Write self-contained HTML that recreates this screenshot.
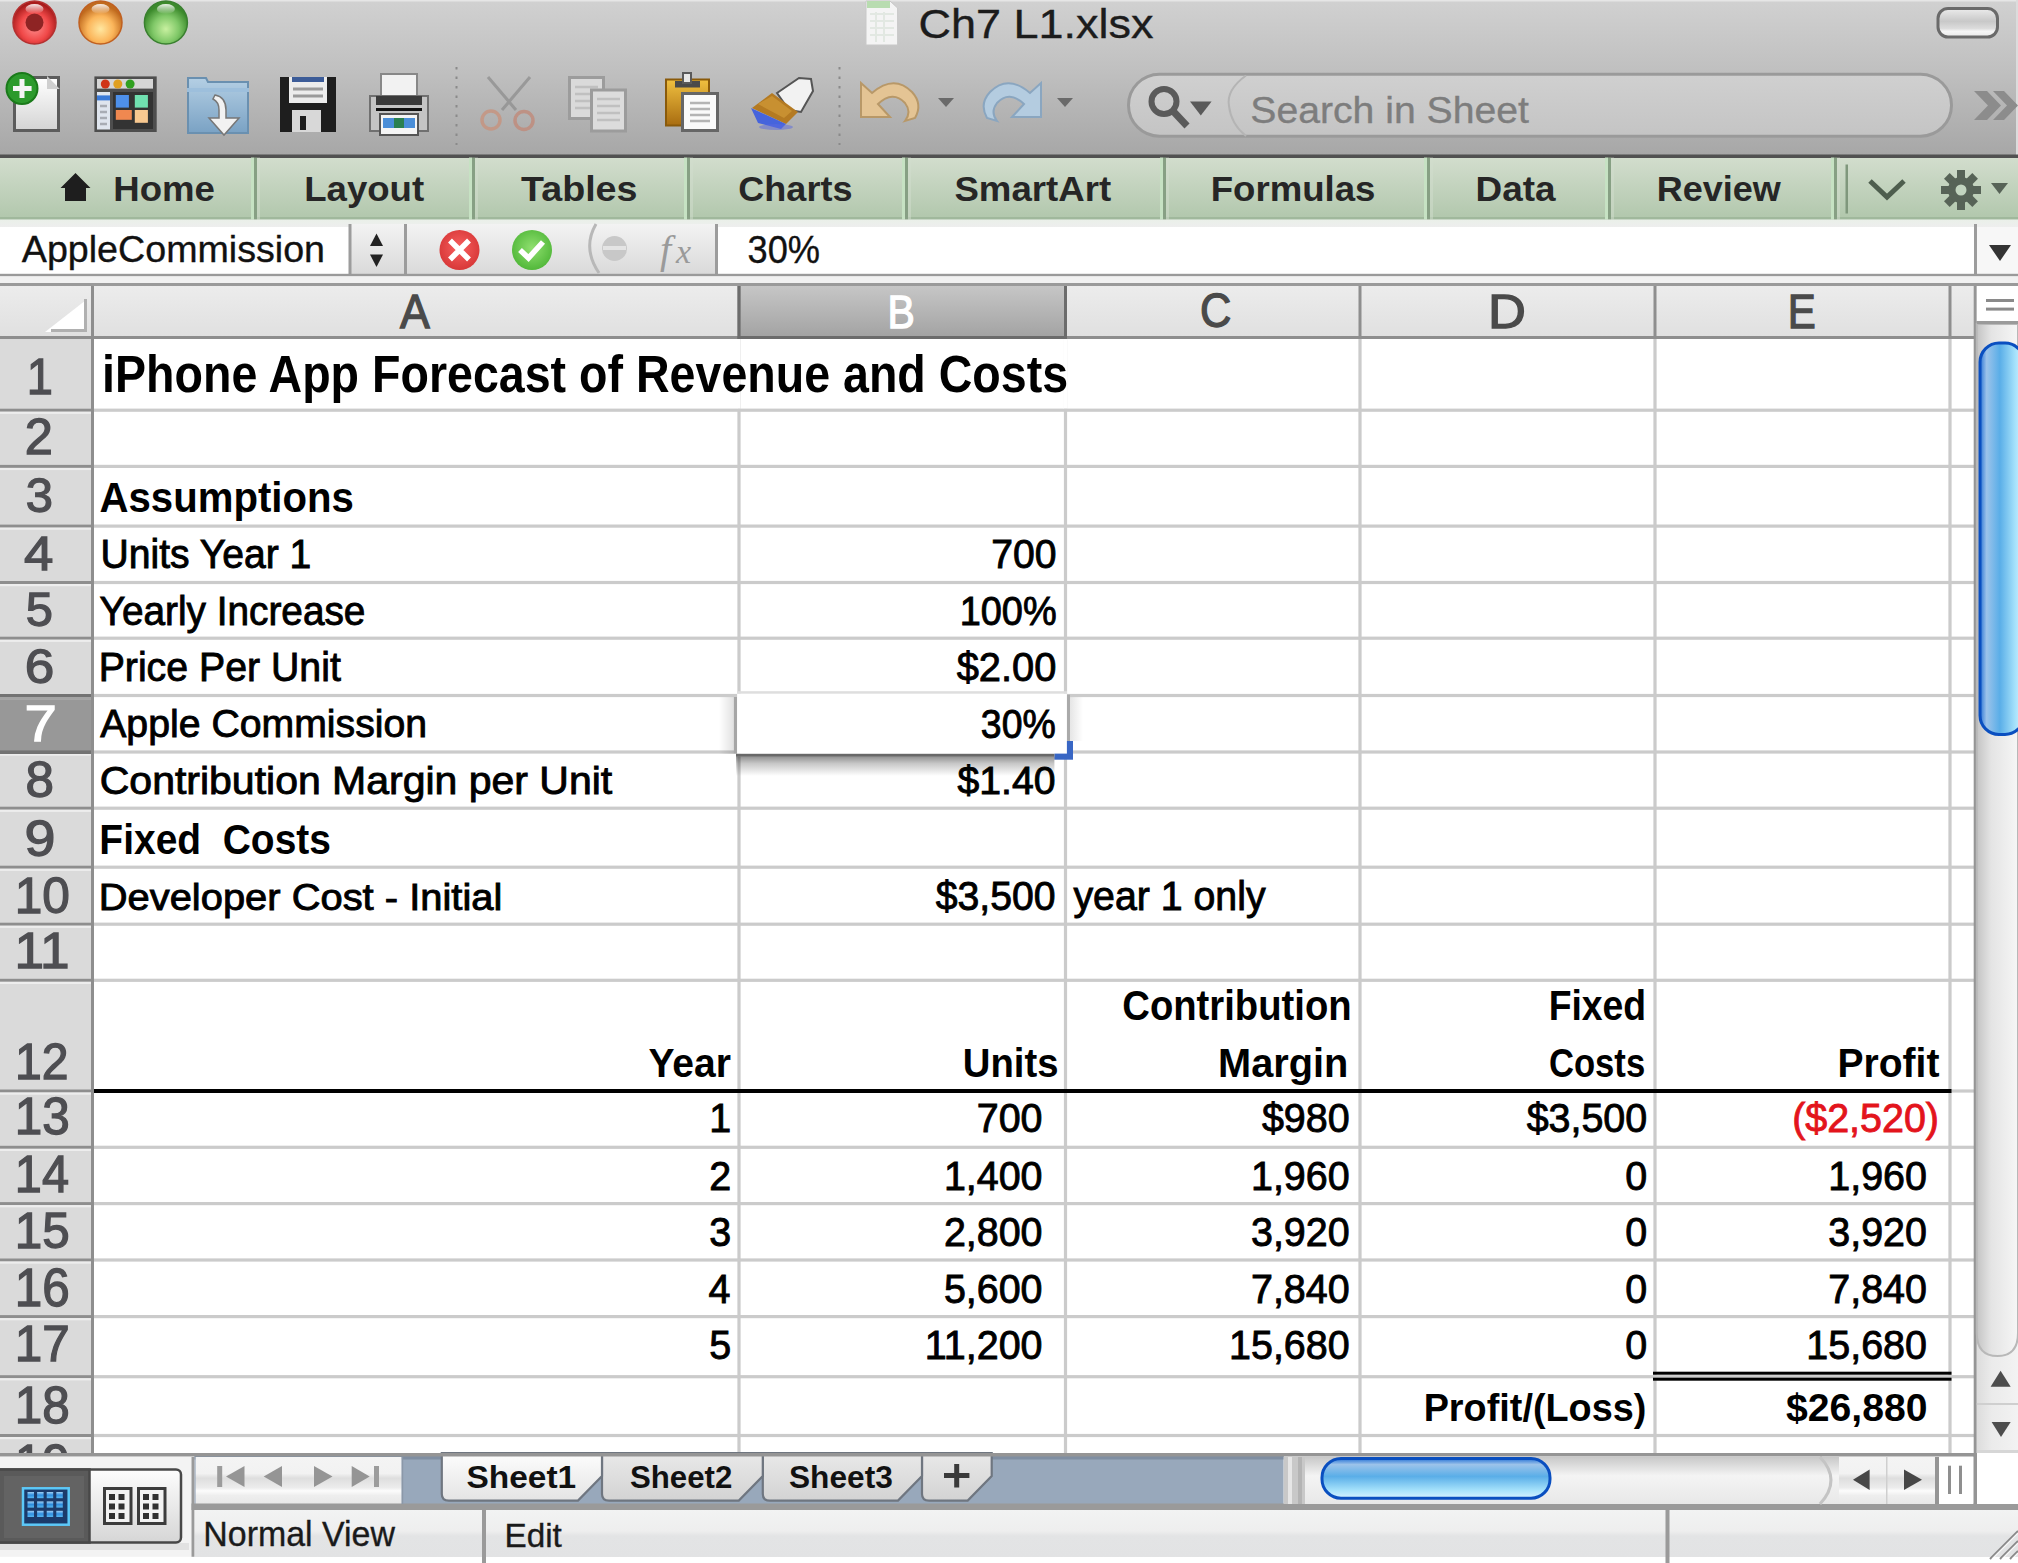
<!DOCTYPE html>
<html><head><meta charset="utf-8"><title>Ch7 L1.xlsx</title>
<style>html,body{margin:0;padding:0;background:#fff;overflow:hidden;width:2018px;height:1563px}</style></head>
<body><svg width="2018" height="1563" viewBox="0 0 2018 1563" style="display:block;font-family:'Liberation Sans',sans-serif">
<defs><linearGradient id="gTool" x1="0" y1="0" x2="0" y2="1"><stop offset="0" stop-color="#d1d1d1"/><stop offset="0.45" stop-color="#c0c0c0"/><stop offset="1" stop-color="#a7a7a7"/></linearGradient><linearGradient id="gRib" x1="0" y1="0" x2="0" y2="1"><stop offset="0" stop-color="#d2ddcd"/><stop offset="1" stop-color="#b1c7ac"/></linearGradient><linearGradient id="gUnder" x1="0" y1="0" x2="0" y2="1"><stop offset="0" stop-color="#eaf0e9"/><stop offset="1" stop-color="#eeeeee"/></linearGradient><linearGradient id="gFbar" x1="0" y1="0" x2="0" y2="1"><stop offset="0" stop-color="#f3f3f3"/><stop offset="1" stop-color="#dadada"/></linearGradient><linearGradient id="gColHdr" x1="0" y1="0" x2="0" y2="1"><stop offset="0" stop-color="#ececec"/><stop offset="1" stop-color="#e0e0e0"/></linearGradient><linearGradient id="gColSel" x1="0" y1="0" x2="0" y2="1"><stop offset="0" stop-color="#c6c6c6"/><stop offset="1" stop-color="#a3a3a3"/></linearGradient><linearGradient id="gVTrough" x1="0" y1="0" x2="1" y2="0"><stop offset="0" stop-color="#c4c4c4"/><stop offset="0.35" stop-color="#e4e4e4"/><stop offset="1" stop-color="#f6f6f6"/></linearGradient><linearGradient id="gHTrough" x1="0" y1="0" x2="0" y2="1"><stop offset="0" stop-color="#c8c8c8"/><stop offset="0.4" stop-color="#f4f4f4"/><stop offset="1" stop-color="#e8e8e8"/></linearGradient><linearGradient id="gStatus" x1="0" y1="0" x2="0" y2="1"><stop offset="0" stop-color="#f2f3f3"/><stop offset="0.45" stop-color="#eeeeee"/><stop offset="0.55" stop-color="#e3e4e5"/><stop offset="1" stop-color="#e2e3e4"/></linearGradient><linearGradient id="gTabAct" x1="0" y1="0" x2="0" y2="1"><stop offset="0" stop-color="#fdfdfd"/><stop offset="1" stop-color="#e4e4e4"/></linearGradient><linearGradient id="gTab" x1="0" y1="0" x2="0" y2="1"><stop offset="0" stop-color="#e9e9e9"/><stop offset="1" stop-color="#d3d3d3"/></linearGradient><linearGradient id="gNav" x1="0" y1="0" x2="0" y2="1"><stop offset="0" stop-color="#f4f4f4"/><stop offset="0.35" stop-color="#f2f2f2"/><stop offset="0.45" stop-color="#dedede"/><stop offset="0.65" stop-color="#ececec"/><stop offset="0.72" stop-color="#fcfcfc"/><stop offset="0.82" stop-color="#eeeeee"/><stop offset="1" stop-color="#e8e8e8"/></linearGradient><linearGradient id="gVThumb" x1="0" y1="0" x2="1" y2="0"><stop offset="0" stop-color="#2a74d6"/><stop offset="0.15" stop-color="#9cc3ea"/><stop offset="0.45" stop-color="#5aaee8"/><stop offset="0.8" stop-color="#a6e2fb"/><stop offset="1" stop-color="#d8f2ff"/></linearGradient><linearGradient id="gHThumb" x1="0" y1="0" x2="0" y2="1"><stop offset="0" stop-color="#2a74d6"/><stop offset="0.15" stop-color="#9cc3ea"/><stop offset="0.45" stop-color="#5aaee8"/><stop offset="0.8" stop-color="#a6e2fb"/><stop offset="1" stop-color="#d8f2ff"/></linearGradient><linearGradient id="gShadow" x1="0" y1="0" x2="0" y2="1"><stop offset="0" stop-color="#000000"/><stop offset="1" stop-color="#ffffff"/></linearGradient><linearGradient id="gSelSh" x1="0" y1="0" x2="0" y2="1"><stop offset="0" stop-color="#000" stop-opacity="0.42"/><stop offset="0.35" stop-color="#000" stop-opacity="0.22"/><stop offset="1" stop-color="#000" stop-opacity="0"/></linearGradient><linearGradient id="gSelL" x1="1" y1="0" x2="0" y2="0"><stop offset="0" stop-color="#000" stop-opacity="0.12"/><stop offset="1" stop-color="#000" stop-opacity="0"/></linearGradient><linearGradient id="gSelR" x1="0" y1="0" x2="1" y2="0"><stop offset="0" stop-color="#000" stop-opacity="0.10"/><stop offset="1" stop-color="#000" stop-opacity="0"/></linearGradient><clipPath id="cRH"><rect x="0" y="339" width="91" height="1114"/></clipPath><linearGradient id="gGridIc" x1="0" y1="0" x2="0" y2="1"><stop offset="0" stop-color="#9fd0f4"/><stop offset="0.5" stop-color="#2f8ee0"/><stop offset="1" stop-color="#58b8f0"/></linearGradient>
<radialGradient id="rRed" cx="0.5" cy="0.6" r="0.55"><stop offset="0" stop-color="#ff8f8f"/><stop offset="0.6" stop-color="#f04848"/><stop offset="1" stop-color="#a81c1c"/></radialGradient>
<radialGradient id="rOrg" cx="0.5" cy="0.65" r="0.55"><stop offset="0" stop-color="#ffe7a0"/><stop offset="0.55" stop-color="#fbb55a"/><stop offset="1" stop-color="#c06a1e"/></radialGradient>
<radialGradient id="rGrn" cx="0.5" cy="0.65" r="0.55"><stop offset="0" stop-color="#c8f0a0"/><stop offset="0.55" stop-color="#80c868"/><stop offset="1" stop-color="#3c8a2c"/></radialGradient>
<linearGradient id="gHi" x1="0" y1="0" x2="0" y2="1"><stop offset="0" stop-color="#ffffff" stop-opacity="0.9"/><stop offset="1" stop-color="#ffffff" stop-opacity="0"/></linearGradient>
<linearGradient id="gGold" x1="0" y1="0" x2="0" y2="1"><stop offset="0" stop-color="#f0c040"/><stop offset="1" stop-color="#a86c10"/></linearGradient>
<linearGradient id="gFolder" x1="0" y1="0" x2="0" y2="1"><stop offset="0" stop-color="#b4cfe4"/><stop offset="1" stop-color="#7aa2c4"/></linearGradient>
<linearGradient id="gPage" x1="0" y1="0" x2="0" y2="1"><stop offset="0" stop-color="#ffffff"/><stop offset="1" stop-color="#d4d4d4"/></linearGradient>
<linearGradient id="gPill" x1="0" y1="0" x2="0" y2="1"><stop offset="0" stop-color="#d0d0d0"/><stop offset="1" stop-color="#c4c4c4"/></linearGradient>
<linearGradient id="gBtnL" x1="0" y1="0" x2="0" y2="1"><stop offset="0" stop-color="#fdfdfd"/><stop offset="1" stop-color="#d6d6d6"/></linearGradient>
<radialGradient id="rX" cx="0.5" cy="0.45" r="0.55"><stop offset="0" stop-color="#f86060"/><stop offset="1" stop-color="#d83838"/></radialGradient>
<radialGradient id="rChk" cx="0.5" cy="0.45" r="0.55"><stop offset="0" stop-color="#90e070"/><stop offset="1" stop-color="#52b83a"/></radialGradient>
<linearGradient id="gTRP" x1="0" y1="0" x2="0" y2="1"><stop offset="0" stop-color="#ececec"/><stop offset="0.45" stop-color="#c8c8c8"/><stop offset="0.7" stop-color="#dcdcdc"/><stop offset="0.8" stop-color="#f6f6f6"/><stop offset="1" stop-color="#e8e8e8"/></linearGradient><linearGradient id="gSh" x1="0" y1="0" x2="0" y2="1"><stop offset="0" stop-color="#000" stop-opacity="0.55"/><stop offset="1" stop-color="#000" stop-opacity="0"/></linearGradient>
<linearGradient id="gShL" x1="1" y1="0" x2="0" y2="0"><stop offset="0" stop-color="#000" stop-opacity="0.25"/><stop offset="1" stop-color="#000" stop-opacity="0"/></linearGradient>
<linearGradient id="gShR" x1="0" y1="0" x2="1" y2="0"><stop offset="0" stop-color="#000" stop-opacity="0.3"/><stop offset="1" stop-color="#000" stop-opacity="0"/></linearGradient></defs>
<rect x="0" y="0" width="2018" height="155" fill="url(#gTool)" />
<rect x="0" y="0" width="2018" height="1.5" fill="#e6e6e6" />
<rect x="2016" y="0" width="2" height="155" fill="#dcdcdc" />
<rect x="0" y="154.5" width="2018" height="3.5" fill="#515151" />
<rect x="0" y="158" width="2018" height="61.6" fill="url(#gRib)" />
<rect x="0" y="217" width="2018" height="2.6" fill="#a0b89c" />
<rect x="251" y="157.5" width="3" height="62" fill="#c6e2c3" />
<rect x="254" y="157.5" width="3" height="62" fill="#87a084" />
<rect x="257" y="157.5" width="3" height="62" fill="#d2ddce" opacity="0.5"/>
<rect x="469" y="157.5" width="3" height="62" fill="#c6e2c3" />
<rect x="472" y="157.5" width="3" height="62" fill="#87a084" />
<rect x="475" y="157.5" width="3" height="62" fill="#d2ddce" opacity="0.5"/>
<rect x="684" y="157.5" width="3" height="62" fill="#c6e2c3" />
<rect x="687" y="157.5" width="3" height="62" fill="#87a084" />
<rect x="690" y="157.5" width="3" height="62" fill="#d2ddce" opacity="0.5"/>
<rect x="902" y="157.5" width="3" height="62" fill="#c6e2c3" />
<rect x="905" y="157.5" width="3" height="62" fill="#87a084" />
<rect x="908" y="157.5" width="3" height="62" fill="#d2ddce" opacity="0.5"/>
<rect x="1160" y="157.5" width="3" height="62" fill="#c6e2c3" />
<rect x="1163" y="157.5" width="3" height="62" fill="#87a084" />
<rect x="1166" y="157.5" width="3" height="62" fill="#d2ddce" opacity="0.5"/>
<rect x="1424" y="157.5" width="3" height="62" fill="#c6e2c3" />
<rect x="1427" y="157.5" width="3" height="62" fill="#87a084" />
<rect x="1430" y="157.5" width="3" height="62" fill="#d2ddce" opacity="0.5"/>
<rect x="1605" y="157.5" width="3" height="62" fill="#c6e2c3" />
<rect x="1608" y="157.5" width="3" height="62" fill="#87a084" />
<rect x="1611" y="157.5" width="3" height="62" fill="#d2ddce" opacity="0.5"/>
<rect x="1831" y="157.5" width="3" height="62" fill="#c6e2c3" />
<rect x="1834" y="157.5" width="3" height="62" fill="#87a084" />
<rect x="1837" y="157.5" width="3" height="62" fill="#d2ddce" opacity="0.5"/>
<rect x="1845.5" y="164.5" width="2.5" height="49" fill="#7f977c" />
<rect x="0" y="219.6" width="2018" height="7.4" fill="url(#gUnder)" />
<rect x="0" y="227" width="2018" height="47" fill="#ffffff" />
<rect x="349" y="224" width="58" height="50" fill="url(#gFbar)" />
<rect x="407" y="224" width="311" height="50" fill="url(#gFbar)" />
<rect x="348.5" y="224" width="3" height="50" fill="#9c9c9c" />
<rect x="404" y="224" width="3" height="50" fill="#9c9c9c" />
<rect x="715" y="224" width="3" height="50" fill="#9c9c9c" />
<rect x="1974" y="224" width="3" height="50" fill="#9c9c9c" />
<rect x="1977" y="227" width="41" height="47" fill="#f7f7f7" />
<rect x="0" y="273.8" width="2018" height="2.6" fill="#9a9a9a" />
<rect x="0" y="276.4" width="2018" height="6.6" fill="#f1f1f1" />
<rect x="0" y="283" width="2018" height="3" fill="#9a9a9a" />
<rect x="0" y="286" width="1974" height="51" fill="url(#gColHdr)" />
<rect x="740" y="286" width="324" height="51" fill="url(#gColSel)" />
<rect x="91" y="286" width="3" height="52" fill="#8e8e8e" />
<rect x="737.5" y="286" width="3" height="52" fill="#8e8e8e" />
<rect x="1064" y="286" width="3" height="52" fill="#8e8e8e" />
<rect x="1358.5" y="286" width="3" height="52" fill="#8e8e8e" />
<rect x="1653.5" y="286" width="3" height="52" fill="#8e8e8e" />
<rect x="1948.5" y="286" width="3" height="52" fill="#8e8e8e" />
<rect x="0" y="336" width="1974" height="3" fill="#8e8e8e" />
<rect x="737.5" y="286" width="3" height="53" fill="#6c6c6c" />
<rect x="1064" y="286" width="3" height="53" fill="#6c6c6c" />
<rect x="737.5" y="336" width="329.5" height="3.5" fill="#6c6c6c" />
<path d="M45 332 L86 332 L86 300 Z" fill="#ffffff"/>
<path d="M51 332 L87 332 L87 299 L84 299 L84 329 L51 329 Z" fill="#b0b0b0"/>
<rect x="0" y="339" width="91" height="1114" fill="#dadada" />
<rect x="0" y="697" width="91" height="54" fill="#989898" />
<rect x="0" y="408.7" width="91" height="3" fill="#8e8e8e" />
<rect x="0" y="411.7" width="91" height="2.2" fill="#ededed" />
<rect x="0" y="464.9" width="91" height="3" fill="#8e8e8e" />
<rect x="0" y="467.9" width="91" height="2.2" fill="#ededed" />
<rect x="0" y="524.6" width="91" height="3" fill="#8e8e8e" />
<rect x="0" y="527.6" width="91" height="2.2" fill="#ededed" />
<rect x="0" y="581.0" width="91" height="3" fill="#8e8e8e" />
<rect x="0" y="584.0" width="91" height="2.2" fill="#ededed" />
<rect x="0" y="636.7" width="91" height="3" fill="#8e8e8e" />
<rect x="0" y="639.7" width="91" height="2.2" fill="#ededed" />
<rect x="0" y="694.0" width="91" height="3" fill="#8e8e8e" />
<rect x="0" y="697.0" width="91" height="2.2" fill="#ededed" />
<rect x="0" y="750.5" width="91" height="3" fill="#8e8e8e" />
<rect x="0" y="753.5" width="91" height="2.2" fill="#ededed" />
<rect x="0" y="806.7" width="91" height="3" fill="#8e8e8e" />
<rect x="0" y="809.7" width="91" height="2.2" fill="#ededed" />
<rect x="0" y="865.7" width="91" height="3" fill="#8e8e8e" />
<rect x="0" y="868.7" width="91" height="2.2" fill="#ededed" />
<rect x="0" y="922.7" width="91" height="3" fill="#8e8e8e" />
<rect x="0" y="925.7" width="91" height="2.2" fill="#ededed" />
<rect x="0" y="978.8" width="91" height="3" fill="#8e8e8e" />
<rect x="0" y="981.8" width="91" height="2.2" fill="#ededed" />
<rect x="0" y="1089.5" width="91" height="3" fill="#8e8e8e" />
<rect x="0" y="1092.5" width="91" height="2.2" fill="#ededed" />
<rect x="0" y="1145.8" width="91" height="3" fill="#8e8e8e" />
<rect x="0" y="1148.8" width="91" height="2.2" fill="#ededed" />
<rect x="0" y="1202.1" width="91" height="3" fill="#8e8e8e" />
<rect x="0" y="1205.1" width="91" height="2.2" fill="#ededed" />
<rect x="0" y="1258.5" width="91" height="3" fill="#8e8e8e" />
<rect x="0" y="1261.5" width="91" height="2.2" fill="#ededed" />
<rect x="0" y="1315.1" width="91" height="3" fill="#8e8e8e" />
<rect x="0" y="1318.1" width="91" height="2.2" fill="#ededed" />
<rect x="0" y="1375.2" width="91" height="3" fill="#8e8e8e" />
<rect x="0" y="1378.2" width="91" height="2.2" fill="#ededed" />
<rect x="0" y="1434.0" width="91" height="3" fill="#8e8e8e" />
<rect x="0" y="1437.0" width="91" height="2.2" fill="#ededed" />
<rect x="0" y="694" width="91" height="3" fill="#737373" />
<rect x="0" y="750.5" width="91" height="3.5" fill="#737373" />
<rect x="0" y="697" width="91" height="2.5" fill="#a4a4a4" />
<rect x="91" y="339" width="3" height="1114" fill="#8e8e8e" />
<rect x="94" y="339" width="1880" height="1114" fill="#ffffff" />
<rect x="737.4" y="339" width="3.2" height="1114" fill="#cbcbcb" />
<rect x="1063.9" y="339" width="3.2" height="1114" fill="#cbcbcb" />
<rect x="1358.4" y="339" width="3.2" height="1114" fill="#cbcbcb" />
<rect x="1653.4" y="339" width="3.2" height="1114" fill="#cbcbcb" />
<rect x="1948.4" y="339" width="3.2" height="1114" fill="#cbcbcb" />
<rect x="94" y="408.59999999999997" width="1880" height="3.2" fill="#cbcbcb" />
<rect x="94" y="464.79999999999995" width="1880" height="3.2" fill="#cbcbcb" />
<rect x="94" y="524.5" width="1880" height="3.2" fill="#cbcbcb" />
<rect x="94" y="580.9" width="1880" height="3.2" fill="#cbcbcb" />
<rect x="94" y="636.6" width="1880" height="3.2" fill="#cbcbcb" />
<rect x="94" y="693.9" width="1880" height="3.2" fill="#cbcbcb" />
<rect x="94" y="750.4" width="1880" height="3.2" fill="#cbcbcb" />
<rect x="94" y="806.6" width="1880" height="3.2" fill="#cbcbcb" />
<rect x="94" y="865.6" width="1880" height="3.2" fill="#cbcbcb" />
<rect x="94" y="922.6" width="1880" height="3.2" fill="#cbcbcb" />
<rect x="94" y="978.6999999999999" width="1880" height="3.2" fill="#cbcbcb" />
<rect x="94" y="1089.4" width="1880" height="3.2" fill="#cbcbcb" />
<rect x="94" y="1145.7" width="1880" height="3.2" fill="#cbcbcb" />
<rect x="94" y="1202.0" width="1880" height="3.2" fill="#cbcbcb" />
<rect x="94" y="1258.4" width="1880" height="3.2" fill="#cbcbcb" />
<rect x="94" y="1315.0" width="1880" height="3.2" fill="#cbcbcb" />
<rect x="94" y="1375.1000000000001" width="1880" height="3.2" fill="#cbcbcb" />
<rect x="94" y="1433.9" width="1880" height="3.2" fill="#cbcbcb" />
<rect x="94" y="1089" width="1857.5" height="4" fill="#000000" />
<rect x="1653" y="1371.7" width="298.5" height="3" fill="#000000" />
<rect x="1653" y="1377.7" width="298.5" height="3" fill="#000000" />
<rect x="719" y="697" width="15" height="57" fill="url(#gSelL)"/>
<rect x="1070" y="697" width="13" height="44" fill="url(#gSelR)"/>
<rect x="1054.4" y="741" width="18.6" height="18.7" fill="#3866c4" />
<rect x="736" y="756.8" width="318.4" height="19.2" fill="url(#gSelSh)" />
<rect x="736" y="753.6" width="318.4" height="3.2" fill="#686868" />
<rect x="733.9" y="697" width="3.2" height="56.6" fill="#a6a6a6" />
<rect x="1066.9" y="694.7" width="3.1" height="46.3" fill="#aaaaaa" />
<rect x="737" y="691.2" width="330" height="2.6" fill="#dedede" />
<rect x="737.1" y="693.8" width="329.8" height="59.8" fill="#ffffff" />
<rect x="737" y="339" width="3.5" height="69.5" fill="#ffffff" />
<rect x="1063.5" y="339" width="3.5" height="69.5" fill="#ffffff" />
<rect x="1973.7" y="286" width="3.1" height="1171" fill="#959595" />
<rect x="1976.8" y="324" width="41.2" height="1129" fill="#f0f0f0" />
<rect x="1977" y="1340" width="41" height="113" fill="url(#gVTrough)" opacity="0.45"/>
<path d="M1976.8 324 H2018 V1333 Q2018 1356 1997.5 1356 Q1976.8 1356 1976.8 1333 Z" fill="url(#gVTrough)" stroke="#b8b8b8" stroke-width="2"/>
<rect x="1976.8" y="286" width="41.2" height="35" fill="#ffffff" />
<rect x="1986" y="299" width="28" height="3" fill="#8a8a8a" />
<rect x="1986" y="307.6" width="28" height="3" fill="#8a8a8a" />
<rect x="1976.8" y="321" width="41.2" height="3" fill="#9a9a9a" />
<rect x="1980" y="343" width="44" height="391.5" rx="19" ry="19" fill="url(#gVThumb)" stroke="#0a4fc0" stroke-width="3"/>
<path d="M1990.6 1386.8 L2000.6 1370.7 L2010.7 1386.8 Z" fill="#4d4d4d"/>
<rect x="1976.8" y="1403" width="41.2" height="2" fill="#cfcfcf" />
<path d="M1991.6 1422 L2010.7 1422 L2001 1437 Z" fill="#4d4d4d"/>
<rect x="0" y="1457" width="191.5" height="100" fill="#f3f3f3" />
<rect x="191.5" y="1457" width="3.1" height="106" fill="#9a9a9a" />
<rect x="194.6" y="1456" width="1089" height="48" fill="#98a8bb" />
<rect x="194.6" y="1456" width="1089" height="3.5" fill="#7f8ea2" />
<rect x="195.6" y="1457" width="206" height="47" fill="url(#gNav)" />
<rect x="0" y="1556.8" width="2018" height="7" fill="#ffffff" />
<rect x="194.6" y="1510" width="1823.4" height="47" fill="url(#gStatus)" />
<rect x="191.5" y="1503.5" width="1826.5" height="6.5" fill="#9a9a9a" />
<rect x="482" y="1510" width="4" height="53" fill="#9a9a9a" />
<rect x="1665.5" y="1510" width="4" height="53" fill="#9a9a9a" />
<rect x="1283.7" y="1457" width="21.3" height="47" fill="#c8c8c8" />
<rect x="1288" y="1457" width="4" height="47" fill="#e6e6e6" />
<rect x="1298" y="1457" width="4" height="47" fill="#b4b4b4" />
<rect x="1305" y="1457" width="630" height="47" fill="url(#gHTrough)" />
<rect x="1322" y="1458.6" width="228" height="39.6" rx="19" ry="19" fill="url(#gHThumb)" stroke="#0a4fc0" stroke-width="3"/>
<rect x="1839" y="1457" width="96" height="47" fill="url(#gNav)" />
<path d="M1820 1457 Q1842 1480 1820 1504" stroke="#c4c4c4" stroke-width="3" fill="none"/>
<rect x="1886" y="1457" width="1.5" height="47" fill="#cfcfcf" />
<path d="M1853 1479.8 L1869.6 1469.5 L1869.6 1490 Z" fill="#474747"/>
<path d="M1904 1469.5 L1922 1479.8 L1904 1490 Z" fill="#474747"/>
<rect x="1935" y="1457" width="4" height="47" fill="#959595" />
<rect x="1939" y="1457" width="34.5" height="47" fill="#ffffff" />
<rect x="1948" y="1465.7" width="3" height="28.3" fill="#8f8f8f" />
<rect x="1959" y="1465.7" width="3" height="28.3" fill="#8f8f8f" />
<rect x="1973.5" y="1453" width="3.5" height="51" fill="#959595" />
<rect x="1977" y="1453" width="41" height="51" fill="#ffffff" />
<rect x="1977" y="1450" width="41" height="3" fill="#d6d6d6" />
<path d="M922 1453 L991.7 1453 L991.7 1476 L967.7 1500.6 L929 1500.6 Q922 1500.6 922 1494 Z" fill="url(#gTab)" stroke="#6f7680" stroke-width="2.2"/>
<path d="M762.8 1453 L922 1453 L922 1476 L898 1500.6 L769.8 1500.6 Q762.8 1500.6 762.8 1494 Z" fill="url(#gTab)" stroke="#6f7680" stroke-width="2.2"/>
<path d="M602 1453 L762.8 1453 L762.8 1476 L738.8 1500.6 L609 1500.6 Q602 1500.6 602 1494 Z" fill="url(#gTab)" stroke="#6f7680" stroke-width="2.2"/>
<path d="M441.8 1453 L602 1453 L602 1476 L578 1500.6 L448.8 1500.6 Q441.8 1500.6 441.8 1494 Z" fill="url(#gTabAct)" stroke="#6f7680" stroke-width="2.2"/>
<rect x="441.8" y="1453" width="160" height="2" fill="#f0f0f0" />
<rect x="0" y="1453" width="1977" height="3.5" fill="#959595" />
<rect x="401.7" y="1457" width="1.5" height="47" fill="#8b98a8" />
<path d="M219.7 1466 V1487 M376.5 1466 V1487" stroke="#9c9c9c" stroke-width="5"/>
<path d="M226 1476.5 L244.5 1466 L244.5 1487 Z" fill="#959595"/>
<path d="M263.7 1476.5 L282 1466 L282 1487 Z" fill="#959595"/>
<path d="M314 1466 L332.5 1476.5 L314 1487 Z" fill="#959595"/>
<path d="M351.7 1466 L369.7 1476.5 L351.7 1487 Z" fill="#959595"/>
<rect x="0" y="1543" width="189" height="7" fill="#e2e2e2" />
<rect x="-4" y="1469.5" width="185" height="73" rx="5" fill="url(#gBtnL)" stroke="#484848" stroke-width="2.5"/>
<rect x="-4" y="1469.5" width="93.5" height="73" fill="#5a5a5a" stroke="#484848" stroke-width="2.5"/>
<rect x="4" y="1476" width="80" height="62" fill="#636363"/>
<rect x="23" y="1488.3" width="45.7" height="36.4" fill="#1b3a6a" stroke="#5cc8f8" stroke-width="2.5"/>
<rect x="27.5" y="1492.0" width="6.5" height="6.2" fill="url(#gGridIc)"/>
<rect x="37.1" y="1492.0" width="6.5" height="6.2" fill="url(#gGridIc)"/>
<rect x="46.7" y="1492.0" width="6.5" height="6.2" fill="url(#gGridIc)"/>
<rect x="56.3" y="1492.0" width="6.5" height="6.2" fill="url(#gGridIc)"/>
<rect x="27.5" y="1501.4" width="6.5" height="6.2" fill="url(#gGridIc)"/>
<rect x="37.1" y="1501.4" width="6.5" height="6.2" fill="url(#gGridIc)"/>
<rect x="46.7" y="1501.4" width="6.5" height="6.2" fill="url(#gGridIc)"/>
<rect x="56.3" y="1501.4" width="6.5" height="6.2" fill="url(#gGridIc)"/>
<rect x="27.5" y="1510.8" width="6.5" height="6.2" fill="url(#gGridIc)"/>
<rect x="37.1" y="1510.8" width="6.5" height="6.2" fill="url(#gGridIc)"/>
<rect x="46.7" y="1510.8" width="6.5" height="6.2" fill="url(#gGridIc)"/>
<rect x="56.3" y="1510.8" width="6.5" height="6.2" fill="url(#gGridIc)"/>
<rect x="104.5" y="1488.5" width="26.5" height="35" fill="#f2f2f2" stroke="#3c3c3c" stroke-width="3"/>
<rect x="109.0" y="1494.0" width="6" height="6" fill="#303030"/>
<rect x="118.5" y="1494.0" width="6" height="6" fill="#303030"/>
<rect x="109.0" y="1503.5" width="6" height="6" fill="#303030"/>
<rect x="118.5" y="1503.5" width="6" height="6" fill="#303030"/>
<rect x="109.0" y="1513.0" width="6" height="6" fill="#303030"/>
<rect x="118.5" y="1513.0" width="6" height="6" fill="#303030"/>
<rect x="138.5" y="1488.5" width="26.5" height="35" fill="#f2f2f2" stroke="#3c3c3c" stroke-width="3"/>
<rect x="143.0" y="1494.0" width="6" height="6" fill="#303030"/>
<rect x="152.5" y="1494.0" width="6" height="6" fill="#303030"/>
<rect x="143.0" y="1503.5" width="6" height="6" fill="#303030"/>
<rect x="152.5" y="1503.5" width="6" height="6" fill="#303030"/>
<rect x="143.0" y="1513.0" width="6" height="6" fill="#303030"/>
<rect x="152.5" y="1513.0" width="6" height="6" fill="#303030"/>
<path d="M1990 1559 L2018 1531 M2000 1559 L2018 1541 M2010 1559 L2018 1551" stroke="#8a8a8a" stroke-width="2"/>
<path d="M1992 1559 L2018 1533 M2002 1559 L2018 1543 M2012 1559 L2018 1553" stroke="#ffffff" stroke-width="1.2" opacity="0.8"/>
<path d="M944 1475.5 H969.4 M956.7 1464 V1487.6" stroke="#3a3a3a" stroke-width="5"/>
<circle cx="34.5" cy="22.6" r="21.5" fill="url(#rRed)" stroke="#b43030" stroke-width="1.5"/>
<circle cx="34.5" cy="22.6" r="9" fill="#8e2424"/>
<ellipse cx="34.5" cy="9" rx="9" ry="5" fill="url(#gHi)"/>
<circle cx="100.5" cy="22.6" r="21.5" fill="url(#rOrg)" stroke="#c06020" stroke-width="1.5"/>
<ellipse cx="100.5" cy="9" rx="9" ry="5" fill="url(#gHi)"/>
<circle cx="165.9" cy="22.6" r="21.5" fill="url(#rGrn)" stroke="#3a8030" stroke-width="1.5"/>
<ellipse cx="165.9" cy="9" rx="9" ry="5" fill="url(#gHi)"/>
<path d="M866 1 L890 1 L897.6 8 L897.6 45 L866 45 Z" fill="#f4f4f4" stroke="#c8c8c8" stroke-width="1"/>
<rect x="867" y="1" width="23" height="7" fill="#b8dcb0"/>
<path d="M870 14 H894 M870 21 H894 M870 28 H894 M870 35 H894 M876 12 V42 M884 12 V42" stroke="#e2e8e2" stroke-width="2"/>
<rect x="1938" y="8.5" width="59.5" height="28.5" rx="10" fill="url(#gTRP)" stroke="#6a6a6a" stroke-width="3"/>
<rect x="14.5" y="77.5" width="44" height="53" fill="url(#gPage)" stroke="#5c5c5c" stroke-width="3"/>
<path d="M47 76 L59.8 89 L47 89 Z" fill="#cfcfcf"/>
<circle cx="22" cy="88.5" r="15.5" fill="#2c9a2c" stroke="#1a7a1a" stroke-width="2"/>
<path d="M19.5 79 H24.5 V86 H31.6 V91 H24.5 V98 H19.5 V91 H13 V86 H19.5 Z" fill="#f4f4f4"/>
<rect x="94.4" y="76.4" width="62.3" height="55.6" fill="#4e4e4e"/>
<rect x="97" y="79" width="56" height="9.6" fill="#d6d6d6"/>
<circle cx="105.3" cy="84" r="4.5" fill="#d03418"/><circle cx="117.8" cy="84" r="4.5" fill="#e0a020"/><circle cx="130.1" cy="84" r="4.5" fill="#30a020"/>
<rect x="97" y="92" width="13" height="37.5" fill="#dfe5ee"/>
<rect x="97" y="95.4" width="13" height="5" fill="#3a7ad8"/>
<path d="M100 106 H107 M100 112 H107 M100 118 H107 M100 124 H107" stroke="#a8acb4" stroke-width="2.5"/>
<rect x="113" y="92" width="40" height="37" fill="#333"/>
<rect x="115.8" y="95" width="13.1" height="12.6" fill="#4e90ea"/>
<rect x="134.8" y="95" width="13.1" height="12.6" fill="#70e0b0"/>
<rect x="115.8" y="110" width="16" height="9.8" fill="#f08850"/>
<rect x="134.8" y="110" width="13.1" height="12.8" fill="#f8c890"/>
<path d="M188 82 L188 78 L206 78 L208 82 L248 82 L248 133 L188 133 Z" fill="url(#gFolder)" stroke="#6a90b0" stroke-width="2"/>
<rect x="187" y="88" width="62" height="4" fill="#9dbfdc"/>
<path d="M215 95 Q226 97 226 110 L226 118 L239 118 L224 135 L209 118 L219 118 L219 110 Q219 102 213 99 Z" fill="#f2f2f2" stroke="#777" stroke-width="1.5"/>
<path d="M280 77 L336 77 L336 132 L280 132 Z" fill="#1e1e1e"/>
<rect x="289" y="77" width="38" height="26" fill="#ececec"/>
<rect x="292" y="77" width="32" height="5" fill="#3c5c98"/>
<path d="M293 89 H323 M293 96 H323" stroke="#9a9a9a" stroke-width="3"/>
<rect x="292" y="110" width="29" height="22" fill="#d8d8d8"/>
<rect x="300" y="116" width="6" height="14" fill="#1e1e1e"/>
<rect x="381" y="74" width="36" height="24" fill="#f2f2f2" stroke="#888" stroke-width="2"/>
<path d="M370 96 L428 96 L428 131 L370 131 Z" fill="#c4c4c4" stroke="#707070" stroke-width="2"/>
<rect x="376" y="96" width="46" height="9" fill="#3a3a3a"/>
<rect x="376" y="108" width="46" height="3" fill="#111"/>
<rect x="380" y="114" width="38" height="21" fill="#f4f4f4" stroke="#555" stroke-width="2"/>
<rect x="383" y="118" width="32" height="10" fill="#4a8ed8"/>
<rect x="394" y="118" width="10" height="10" fill="#2a8050"/>
<path d="M456.5 67 V145" stroke="#8a8a8a" stroke-width="2" stroke-dasharray="2.5 7"/>
<path d="M839.5 67 V145" stroke="#8a8a8a" stroke-width="2" stroke-dasharray="2.5 7"/>
<path d="M488 77 L516 110 M530 77 L502 110" stroke="#8e8e8e" stroke-width="3" opacity="0.75"/>
<circle cx="491" cy="120" r="9" fill="none" stroke="#c69480" stroke-width="3.5" opacity="0.85"/>
<circle cx="524" cy="120.5" r="9" fill="none" stroke="#c08c7c" stroke-width="3.5" opacity="0.85"/>
<rect x="569.5" y="77.5" width="34" height="41" fill="#dadada" stroke="#9c9c9c" stroke-width="3"/>
<path d="M575 87 H598 M575 94 H598 M575 101 H598 M575 108 H598" stroke="#c0c0c0" stroke-width="2.5"/>
<rect x="591.5" y="90" width="34" height="41" fill="#dcdcdc" stroke="#9c9c9c" stroke-width="3"/>
<path d="M597 99 H620 M597 106 H620 M597 113 H620 M597 120 H620" stroke="#c0c0c0" stroke-width="2.5"/>
<rect x="666" y="79.5" width="43" height="46" fill="url(#gGold)" stroke="#8a5a0a" stroke-width="2"/>
<rect x="675" y="81" width="25" height="6.5" fill="#4a4a4a"/>
<rect x="683" y="73" width="8" height="10" fill="#e8e8e8" stroke="#5a5a5a" stroke-width="2"/>
<rect x="682.5" y="93.5" width="35" height="37" fill="#fafafa" stroke="#666" stroke-width="3"/>
<path d="M690 103 H710 M690 109 H710 M690 115 H710 M690 121 H710" stroke="#b4b4b4" stroke-width="2.5"/>
<path d="M777 93 L799 78 L811 79 L813 91 L801 112 L789 110 Z" fill="#f2f2f2" stroke="#555" stroke-width="2"/>
<path d="M752 108 L772 93 L798 112 L786 124 Z" fill="#b47a22"/>
<path d="M758 104 L772 96 L792 111 L784 118 Z" fill="#d09a38" opacity="0.7"/>
<path d="M751 108 L786 124 L781 129 L758 123 Z" fill="#4664dc"/>
<ellipse cx="776" cy="127" rx="17" ry="3" fill="#5a6ae0" opacity="0.5"/>
<path d="M861 83 L861 117 L890 117 L878 104 Q893 90 905 103 Q912 112 905 121 L915 118 Q923 104 912 92 Q894 74 872 93 Z" fill="#e4c494" stroke="#b89868" stroke-width="2"/>
<path d="M938 98 L954 98 L946 107 Z" fill="#6a6a6a"/>
<path d="M1041 83 L1041 117 L1012 117 L1024 104 Q1009 90 997 103 Q990 112 997 121 L987 118 Q979 104 990 92 Q1008 74 1030 93 Z" fill="#b4cce0" stroke="#8aa6c0" stroke-width="2"/>
<path d="M1057 98 L1073 98 L1065 107 Z" fill="#6a6a6a"/>
<rect x="1128.5" y="74.2" width="823" height="62" rx="31" fill="url(#gPill)" stroke="#9a9a9a" stroke-width="3"/>
<path d="M1246 75.5 Q1226 90 1229 106 Q1231 124 1246 136" stroke="#b4b4b4" stroke-width="2" fill="none"/>
<circle cx="1164" cy="101.5" r="12.5" fill="none" stroke="#5a5a5a" stroke-width="6"/>
<path d="M1173 111 L1187 126" stroke="#5a5a5a" stroke-width="7"/>
<path d="M1190 101.5 L1211.6 101.5 L1200.8 115.5 Z" fill="#5a5a5a"/>
<path d="M1974 91 L1987 91 L2001 105.5 L1987 120 L1974 120 L1988 105.5 Z M1993 91 L2004 91 L2018 105.5 L2004 120 L1993 120 L2007 105.5 Z" fill="#8c8c8c"/>
<path d="M60.5 188 L75.5 173 L90.5 188 L86 188 L86 201 L65 201 L65 188 Z" fill="#1e1e1e"/>
<path d="M1870 181 L1887 197 L1904 181" stroke="#4e5e4e" stroke-width="5" fill="none"/>
<rect x="1957" y="170" width="8" height="10" fill="#576357" transform="rotate(0 1961 190)"/><rect x="1957" y="170" width="8" height="10" fill="#576357" transform="rotate(45 1961 190)"/><rect x="1957" y="170" width="8" height="10" fill="#576357" transform="rotate(90 1961 190)"/><rect x="1957" y="170" width="8" height="10" fill="#576357" transform="rotate(135 1961 190)"/><rect x="1957" y="170" width="8" height="10" fill="#576357" transform="rotate(180 1961 190)"/><rect x="1957" y="170" width="8" height="10" fill="#576357" transform="rotate(225 1961 190)"/><rect x="1957" y="170" width="8" height="10" fill="#576357" transform="rotate(270 1961 190)"/><rect x="1957" y="170" width="8" height="10" fill="#576357" transform="rotate(315 1961 190)"/>
<circle cx="1961" cy="190" r="13" fill="#576357"/><circle cx="1961" cy="190" r="5.5" fill="#c2d4bf"/>
<path d="M1991 183 L2008 183 L1999.5 194 Z" fill="#576357"/>
<path d="M370 246 L376.5 233.6 L383 246 Z" fill="#222"/>
<path d="M370 254.6 L383 254.6 L376.5 267 Z" fill="#222"/>
<circle cx="459.5" cy="250" r="20" fill="url(#rX)"/>
<path d="M450 240.5 L469 259.5 M469 240.5 L450 259.5" stroke="#fff" stroke-width="5.5"/>
<circle cx="532" cy="250" r="20" fill="url(#rChk)"/>
<path d="M520 250 L528.5 258 L543 242" stroke="#fff" stroke-width="5.5" fill="none"/>
<path d="M596 224 Q582 248 599 273" stroke="#b8b8b8" stroke-width="3" fill="none"/>
<circle cx="614.5" cy="248.5" r="12.5" fill="#c8c8c8"/>
<rect x="603" y="246" width="23" height="4" fill="#f0f0f0" opacity="0.7"/>
<text x="660" y="263" font-family="Liberation Serif" font-style="italic" font-size="40" fill="#9a9a9a">f</text>
<text x="676" y="263" font-family="Liberation Serif" font-style="italic" font-size="34" fill="#9a9a9a">x</text>
<path d="M1989 245 L2011 245 L2000 261 Z" fill="#333"/>
<text transform="matrix(1.0915 0 0 1 918.49 38.00)" font-size="41.24" font-weight="normal" fill="#1c1c1c" stroke="#1c1c1c" stroke-width="0.35" xml:space="preserve">Ch7 L1.xlsx</text>
<text transform="matrix(1.0420 0 0 1 113.21 201.00)" font-size="35.13" font-weight="bold" fill="#262626"  xml:space="preserve">Home</text>
<text transform="matrix(1.0419 0 0 1 304.21 201.00)" font-size="35.13" font-weight="bold" fill="#262626"  xml:space="preserve">Layout</text>
<text transform="matrix(1.0722 0 0 1 521.00 201.00)" font-size="35.13" font-weight="bold" fill="#262626"  xml:space="preserve">Tables</text>
<text transform="matrix(1.0253 0 0 1 738.37 201.00)" font-size="35.13" font-weight="bold" fill="#262626"  xml:space="preserve">Charts</text>
<text transform="matrix(1.0429 0 0 1 954.43 201.00)" font-size="35.13" font-weight="bold" fill="#262626"  xml:space="preserve">SmartArt</text>
<text transform="matrix(1.0421 0 0 1 1210.71 201.00)" font-size="35.13" font-weight="bold" fill="#262626"  xml:space="preserve">Formulas</text>
<text transform="matrix(1.0503 0 0 1 1475.49 201.00)" font-size="35.13" font-weight="bold" fill="#262626"  xml:space="preserve">Data</text>
<text transform="matrix(1.0253 0 0 1 1656.75 201.00)" font-size="35.13" font-weight="bold" fill="#262626"  xml:space="preserve">Review</text>
<text transform="matrix(1.0258 0 0 1 21.80 261.60)" font-size="36.69" font-weight="normal" fill="#111" stroke="#111" stroke-width="0.35" xml:space="preserve">AppleCommission</text>
<text transform="matrix(0.9435 0 0 1 747.57 263.00)" font-size="38.40" font-weight="normal" fill="#111" stroke="#111" stroke-width="0.35" xml:space="preserve">30%</text>
<text transform="matrix(1.0588 0 0 1 1250.28 123.00)" font-size="36.98" font-weight="normal" fill="#7d7d7d" stroke="#7d7d7d" stroke-width="0.35" xml:space="preserve">Search in Sheet</text>
<text transform="matrix(0.9372 0 0 1 400.00 327.50)" font-size="47.64" font-weight="normal" fill="#4a4a4a" stroke="#4a4a4a" stroke-width="1.3" xml:space="preserve">A</text>
<text transform="matrix(0.9000 0 0 1 887.40 328.00)" font-size="45.51" font-weight="normal" fill="#ffffff" stroke="#ffffff" stroke-width="1.3" xml:space="preserve">B</text>
<text transform="matrix(0.8896 0 0 1 1199.97 326.80)" font-size="48.78" font-weight="normal" fill="#4a4a4a" stroke="#4a4a4a" stroke-width="1.3" xml:space="preserve">C</text>
<text transform="matrix(1.0860 0 0 1 1487.90 328.00)" font-size="48.36" font-weight="normal" fill="#4a4a4a" stroke="#4a4a4a" stroke-width="1.3" xml:space="preserve">D</text>
<text transform="matrix(0.8697 0 0 1 1787.71 328.00)" font-size="48.36" font-weight="normal" fill="#4a4a4a" stroke="#4a4a4a" stroke-width="1.3" xml:space="preserve">E</text>
<text transform="matrix(0.9096 0 0 1 102.09 392.00)" font-size="51.20" font-weight="bold" fill="#000"  xml:space="preserve">iPhone App Forecast of Revenue and Costs</text>
<text transform="matrix(0.9254 0 0 1 99.57 511.60)" font-size="43.38" font-weight="bold" fill="#000"  xml:space="preserve">Assumptions</text>
<text transform="matrix(0.9782 0 0 1 100.56 568.10)" font-size="39.96" font-weight="normal" fill="#000" stroke="#000" stroke-width="0.9" xml:space="preserve">Units Year 1</text>
<text transform="matrix(0.9795 0 0 1 991.17 568.10)" font-size="39.96" font-weight="normal" fill="#000" stroke="#000" stroke-width="0.9" xml:space="preserve">700</text>
<text transform="matrix(0.9673 0 0 1 99.59 624.60)" font-size="40.11" font-weight="normal" fill="#000" stroke="#000" stroke-width="0.9" xml:space="preserve">Yearly Increase</text>
<text transform="matrix(0.9456 0 0 1 959.63 624.60)" font-size="40.11" font-weight="normal" fill="#000" stroke="#000" stroke-width="0.9" xml:space="preserve">100%</text>
<text transform="matrix(0.9757 0 0 1 98.63 680.90)" font-size="40.25" font-weight="normal" fill="#000" stroke="#000" stroke-width="0.9" xml:space="preserve">Price Per Unit</text>
<text transform="matrix(0.9908 0 0 1 956.70 680.90)" font-size="40.25" font-weight="normal" fill="#000" stroke="#000" stroke-width="0.9" xml:space="preserve">$2.00</text>
<text transform="matrix(1.0029 0 0 1 100.20 737.40)" font-size="39.11" font-weight="normal" fill="#000" stroke="#000" stroke-width="0.9" xml:space="preserve">Apple Commission</text>
<text transform="matrix(0.9395 0 0 1 980.83 738.00)" font-size="39.82" font-weight="normal" fill="#000" stroke="#000" stroke-width="0.9" xml:space="preserve">30%</text>
<text transform="matrix(1.0480 0 0 1 99.78 793.90)" font-size="39.11" font-weight="normal" fill="#000" stroke="#000" stroke-width="0.9" xml:space="preserve">Contribution Margin per Unit</text>
<text transform="matrix(1.0206 0 0 1 957.50 794.00)" font-size="38.40" font-weight="normal" fill="#000" stroke="#000" stroke-width="0.9" xml:space="preserve">$1.40</text>
<text transform="matrix(0.9130 0 0 1 99.37 854.00)" font-size="42.67" font-weight="bold" fill="#000"  xml:space="preserve">Fixed  Costs</text>
<text transform="matrix(1.0792 0 0 1 98.68 910.00)" font-size="36.98" font-weight="normal" fill="#000" stroke="#000" stroke-width="0.9" xml:space="preserve">Developer Cost - Initial</text>
<text transform="matrix(0.9842 0 0 1 935.70 910.00)" font-size="39.82" font-weight="normal" fill="#000" stroke="#000" stroke-width="0.9" xml:space="preserve">$3,500</text>
<text transform="matrix(0.9872 0 0 1 1073.40 910.00)" font-size="39.82" font-weight="normal" fill="#000" stroke="#000" stroke-width="0.9" xml:space="preserve">year 1 only</text>
<text transform="matrix(0.9473 0 0 1 648.39 1076.50)" font-size="41.24" font-weight="bold" fill="#000"  xml:space="preserve">Year</text>
<text transform="matrix(0.9286 0 0 1 962.80 1076.50)" font-size="41.24" font-weight="bold" fill="#000"  xml:space="preserve">Units</text>
<text transform="matrix(0.9083 0 0 1 1122.31 1019.60)" font-size="42.10" font-weight="bold" fill="#000"  xml:space="preserve">Contribution</text>
<text transform="matrix(0.9646 0 0 1 1218.01 1076.50)" font-size="41.24" font-weight="bold" fill="#000"  xml:space="preserve">Margin</text>
<text transform="matrix(0.8870 0 0 1 1548.67 1019.60)" font-size="42.10" font-weight="bold" fill="#000"  xml:space="preserve">Fixed</text>
<text transform="matrix(0.8403 0 0 1 1548.92 1076.50)" font-size="41.24" font-weight="bold" fill="#000"  xml:space="preserve">Costs</text>
<text transform="matrix(0.9466 0 0 1 1837.56 1076.50)" font-size="41.24" font-weight="bold" fill="#000"  xml:space="preserve">Profit</text>
<text transform="matrix(0.9800 0 0 1 709.16 1132.00)" font-size="40.25" font-weight="normal" fill="#000" stroke="#000" stroke-width="0.9" xml:space="preserve">1</text>
<text transform="matrix(0.9800 0 0 1 976.77 1132.00)" font-size="40.25" font-weight="normal" fill="#000" stroke="#000" stroke-width="0.9" xml:space="preserve">700</text>
<text transform="matrix(0.9800 0 0 1 1261.93 1132.00)" font-size="40.25" font-weight="normal" fill="#000" stroke="#000" stroke-width="0.9" xml:space="preserve">$980</text>
<text transform="matrix(0.9800 0 0 1 1526.64 1132.00)" font-size="40.25" font-weight="normal" fill="#000" stroke="#000" stroke-width="0.9" xml:space="preserve">$3,500</text>
<text transform="matrix(0.9800 0 0 1 1792.13 1132.00)" font-size="40.25" font-weight="normal" fill="#e3141c" stroke="#e3141c" stroke-width="0.9" xml:space="preserve">($2,520)</text>
<text transform="matrix(0.9800 0 0 1 709.16 1189.70)" font-size="40.25" font-weight="normal" fill="#000" stroke="#000" stroke-width="0.9" xml:space="preserve">2</text>
<text transform="matrix(0.9800 0 0 1 943.88 1189.70)" font-size="40.25" font-weight="normal" fill="#000" stroke="#000" stroke-width="0.9" xml:space="preserve">1,400</text>
<text transform="matrix(0.9800 0 0 1 1250.98 1189.70)" font-size="40.25" font-weight="normal" fill="#000" stroke="#000" stroke-width="0.9" xml:space="preserve">1,960</text>
<text transform="matrix(0.9800 0 0 1 1625.35 1189.70)" font-size="40.25" font-weight="normal" fill="#000" stroke="#000" stroke-width="0.9" xml:space="preserve">0</text>
<text transform="matrix(0.9800 0 0 1 1828.28 1189.70)" font-size="40.25" font-weight="normal" fill="#000" stroke="#000" stroke-width="0.9" xml:space="preserve">1,960</text>
<text transform="matrix(0.9800 0 0 1 709.16 1246.20)" font-size="40.25" font-weight="normal" fill="#000" stroke="#000" stroke-width="0.9" xml:space="preserve">3</text>
<text transform="matrix(0.9800 0 0 1 943.88 1246.20)" font-size="40.25" font-weight="normal" fill="#000" stroke="#000" stroke-width="0.9" xml:space="preserve">2,800</text>
<text transform="matrix(0.9800 0 0 1 1250.98 1246.20)" font-size="40.25" font-weight="normal" fill="#000" stroke="#000" stroke-width="0.9" xml:space="preserve">3,920</text>
<text transform="matrix(0.9800 0 0 1 1625.35 1246.20)" font-size="40.25" font-weight="normal" fill="#000" stroke="#000" stroke-width="0.9" xml:space="preserve">0</text>
<text transform="matrix(0.9800 0 0 1 1828.28 1246.20)" font-size="40.25" font-weight="normal" fill="#000" stroke="#000" stroke-width="0.9" xml:space="preserve">3,920</text>
<text transform="matrix(0.9800 0 0 1 708.55 1302.60)" font-size="40.25" font-weight="normal" fill="#000" stroke="#000" stroke-width="0.9" xml:space="preserve">4</text>
<text transform="matrix(0.9800 0 0 1 943.88 1302.60)" font-size="40.25" font-weight="normal" fill="#000" stroke="#000" stroke-width="0.9" xml:space="preserve">5,600</text>
<text transform="matrix(0.9800 0 0 1 1250.98 1302.60)" font-size="40.25" font-weight="normal" fill="#000" stroke="#000" stroke-width="0.9" xml:space="preserve">7,840</text>
<text transform="matrix(0.9800 0 0 1 1625.35 1302.60)" font-size="40.25" font-weight="normal" fill="#000" stroke="#000" stroke-width="0.9" xml:space="preserve">0</text>
<text transform="matrix(0.9800 0 0 1 1828.28 1302.60)" font-size="40.25" font-weight="normal" fill="#000" stroke="#000" stroke-width="0.9" xml:space="preserve">7,840</text>
<text transform="matrix(0.9800 0 0 1 709.16 1358.70)" font-size="40.25" font-weight="normal" fill="#000" stroke="#000" stroke-width="0.9" xml:space="preserve">5</text>
<text transform="matrix(0.9800 0 0 1 924.87 1358.70)" font-size="40.25" font-weight="normal" fill="#000" stroke="#000" stroke-width="0.9" xml:space="preserve">11,200</text>
<text transform="matrix(0.9800 0 0 1 1229.04 1358.70)" font-size="40.25" font-weight="normal" fill="#000" stroke="#000" stroke-width="0.9" xml:space="preserve">15,680</text>
<text transform="matrix(0.9800 0 0 1 1625.35 1358.70)" font-size="40.25" font-weight="normal" fill="#000" stroke="#000" stroke-width="0.9" xml:space="preserve">0</text>
<text transform="matrix(0.9800 0 0 1 1806.34 1358.70)" font-size="40.25" font-weight="normal" fill="#000" stroke="#000" stroke-width="0.9" xml:space="preserve">15,680</text>
<text transform="matrix(0.9566 0 0 1 1423.64 1420.80)" font-size="39.54" font-weight="bold" fill="#000"  xml:space="preserve">Profit/(Loss)</text>
<text transform="matrix(0.9907 0 0 1 1786.00 1420.80)" font-size="39.54" font-weight="bold" fill="#000"  xml:space="preserve">$26,880</text>
<g clip-path="url(#cRH)"><text transform="matrix(0.9310 0 0 1 26.66 393.90)" font-size="50.49" font-weight="normal" fill="#4e4e52" stroke="#4e4e52" stroke-width="1.3" xml:space="preserve">1</text></g>
<g clip-path="url(#cRH)"><text transform="matrix(1.0014 0 0 1 24.83 454.30)" font-size="50.49" font-weight="normal" fill="#4e4e52" stroke="#4e4e52" stroke-width="1.3" xml:space="preserve">2</text></g>
<g clip-path="url(#cRH)"><text transform="matrix(1.0030 0 0 1 25.67 512.30)" font-size="48.78" font-weight="normal" fill="#4e4e52" stroke="#4e4e52" stroke-width="1.3" xml:space="preserve">3</text></g>
<g clip-path="url(#cRH)"><text transform="matrix(1.0814 0 0 1 24.08 570.30)" font-size="48.78" font-weight="normal" fill="#4e4e52" stroke="#4e4e52" stroke-width="1.3" xml:space="preserve">4</text></g>
<g clip-path="url(#cRH)"><text transform="matrix(1.0001 0 0 1 25.67 626.00)" font-size="48.92" font-weight="normal" fill="#4e4e52" stroke="#4e4e52" stroke-width="1.3" xml:space="preserve">5</text></g>
<g clip-path="url(#cRH)"><text transform="matrix(1.0889 0 0 1 24.71 682.70)" font-size="48.78" font-weight="normal" fill="#4e4e52" stroke="#4e4e52" stroke-width="1.3" xml:space="preserve">6</text></g>
<g clip-path="url(#cRH)"><text transform="matrix(1.1535 0 0 1 24.47 740.90)" font-size="50.49" font-weight="normal" fill="#ffffff" stroke="#ffffff" stroke-width="1.3" xml:space="preserve">7</text></g>
<g clip-path="url(#cRH)"><text transform="matrix(1.0141 0 0 1 25.60 796.50)" font-size="50.49" font-weight="normal" fill="#4e4e52" stroke="#4e4e52" stroke-width="1.3" xml:space="preserve">8</text></g>
<g clip-path="url(#cRH)"><text transform="matrix(1.1028 0 0 1 24.59 855.70)" font-size="50.49" font-weight="normal" fill="#4e4e52" stroke="#4e4e52" stroke-width="1.3" xml:space="preserve">9</text></g>
<g clip-path="url(#cRH)"><text transform="matrix(0.9836 0 0 1 14.70 912.50)" font-size="50.49" font-weight="normal" fill="#4e4e52" stroke="#4e4e52" stroke-width="1.3" xml:space="preserve">10</text></g>
<g clip-path="url(#cRH)"><text transform="matrix(1.0527 0 0 1 14.48 968.20)" font-size="50.49" font-weight="normal" fill="#4e4e52" stroke="#4e4e52" stroke-width="1.3" xml:space="preserve">11</text></g>
<g clip-path="url(#cRH)"><text transform="matrix(0.9537 0 0 1 14.89 1079.00)" font-size="50.49" font-weight="normal" fill="#4e4e52" stroke="#4e4e52" stroke-width="1.3" xml:space="preserve">12</text></g>
<g clip-path="url(#cRH)"><text transform="matrix(0.9710 0 0 1 14.81 1134.20)" font-size="50.92" font-weight="normal" fill="#4e4e52" stroke="#4e4e52" stroke-width="1.3" xml:space="preserve">13</text></g>
<g clip-path="url(#cRH)"><text transform="matrix(0.9562 0 0 1 14.86 1191.80)" font-size="50.92" font-weight="normal" fill="#4e4e52" stroke="#4e4e52" stroke-width="1.3" xml:space="preserve">14</text></g>
<g clip-path="url(#cRH)"><text transform="matrix(0.9738 0 0 1 14.81 1248.00)" font-size="50.77" font-weight="normal" fill="#4e4e52" stroke="#4e4e52" stroke-width="1.3" xml:space="preserve">15</text></g>
<g clip-path="url(#cRH)"><text transform="matrix(0.9370 0 0 1 14.81 1305.70)" font-size="52.76" font-weight="normal" fill="#4e4e52" stroke="#4e4e52" stroke-width="1.3" xml:space="preserve">16</text></g>
<g clip-path="url(#cRH)"><text transform="matrix(0.9738 0 0 1 14.81 1360.70)" font-size="50.77" font-weight="normal" fill="#4e4e52" stroke="#4e4e52" stroke-width="1.3" xml:space="preserve">17</text></g>
<g clip-path="url(#cRH)"><text transform="matrix(0.9710 0 0 1 14.81 1423.40)" font-size="50.92" font-weight="normal" fill="#4e4e52" stroke="#4e4e52" stroke-width="1.3" xml:space="preserve">18</text></g>
<g clip-path="url(#cRH)"><text transform="matrix(0.9793 0 0 1 14.81 1480.00)" font-size="50.49" font-weight="normal" fill="#4e4e52" stroke="#4e4e52" stroke-width="1.3" xml:space="preserve">19</text></g>
<text transform="matrix(1.0553 0 0 1 466.48 1487.60)" font-size="31.72" font-weight="bold" fill="#111"  xml:space="preserve">Sheet1</text>
<text transform="matrix(0.9842 0 0 1 629.91 1487.60)" font-size="31.72" font-weight="bold" fill="#111"  xml:space="preserve">Sheet2</text>
<text transform="matrix(0.9979 0 0 1 789.01 1487.60)" font-size="31.72" font-weight="bold" fill="#111"  xml:space="preserve">Sheet3</text>
<text transform="matrix(0.9774 0 0 1 203.35 1546.00)" font-size="34.70" font-weight="normal" fill="#1a1a1a" stroke="#1a1a1a" stroke-width="0.35" xml:space="preserve">Normal View</text>
<text transform="matrix(0.9775 0 0 1 504.39 1547.00)" font-size="34.13" font-weight="normal" fill="#1a1a1a" stroke="#1a1a1a" stroke-width="0.35" xml:space="preserve">Edit</text>

</svg></body></html>
